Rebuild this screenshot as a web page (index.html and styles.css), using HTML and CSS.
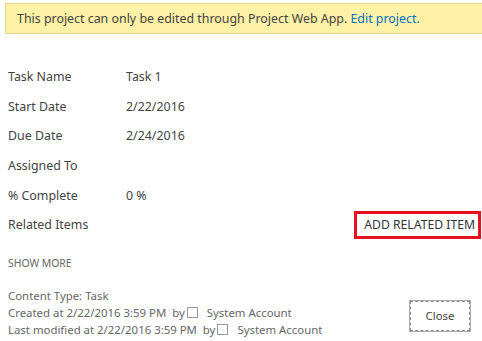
FILE: index.html
```html
<!DOCTYPE html>
<html>
<head>
<meta charset="utf-8">
<link rel="stylesheet" href="styles.css">
</head>
<body>
<div class="banner">This project can only be edited through Project Web App. <a class="link" href="#">Edit project.</a></div>
<div class="fields">
  <div class="row"><span class="label">Task Name</span><span class="value">Task 1</span></div>
  <div class="row"><span class="label">Start Date</span><span class="value">2/22/2016</span></div>
  <div class="row"><span class="label">Due Date</span><span class="value">2/24/2016</span></div>
  <div class="row"><span class="label">Assigned To</span><span class="value"></span></div>
  <div class="row"><span class="label">% Complete</span><span class="value">0 %</span></div>
  <div class="row related"><span class="label">Related Items</span><span class="add">ADD RELATED ITEM</span></div>
</div>
<div class="showmore">SHOW MORE</div>
<div class="footer">
  <div class="meta">
    <div>Content Type: Task</div>
    <div>Created at 2/22/2016 3:59 PM&nbsp; by<span class="box"></span> System Account</div>
    <div>Last modified at 2/22/2016 3:59 PM&nbsp; by<span class="box"></span> System Account</div>
  </div>
  <button class="close">Close</button>
</div>
</body>
</html>
```
FILE: styles.css
```css
html, body {
  margin: 0;
  padding: 0;
  background: #fff;
  overflow: hidden;
}
body {
  font-family: "Noto Sans", "Open Sans", sans-serif;
  color: #444;
  font-size: 12px;
  width: 482px;
  height: 341px;
}
.banner {
  margin: 3px -10px 0 5px;
  height: 31px;
  line-height: 30px;
  box-sizing: border-box;
  border: 1px solid #e3d991;
  background: #fff1a5;
  padding-left: 11px;
  font-size: 12.4px;
  color: #444;
  white-space: nowrap;
}
.link {
  color: #0072c6;
  text-decoration: none;
}
.fields {
  margin-top: 28px;
  padding-left: 8px;
}
.row {
  display: flex;
  align-items: center;
  height: 29.6px;
  font-size: 12.4px;
  color: #444;
}
.label {
  width: 118px;
}
.value {
  color: #444;
}
.related {
  justify-content: space-between;
  padding-right: 1px;
}
.add {
  border: 3px solid #e81123;
  padding: 0 3px 0 7px;
  height: 28px;
  line-height: 22px;
  box-sizing: border-box;
  color: #333;
  font-size: 12.2px;
}
.showmore {
  margin-top: 16px;
  padding-left: 8px;
  font-size: 10.4px;
  color: #666;
}
.footer {
  margin-top: 17px;
  padding-left: 8px;
  padding-right: 12px;
  display: flex;
  justify-content: space-between;
  align-items: flex-end;
}
.meta {
  font-size: 11.4px;
  color: #666;
  line-height: 17px;
}
.box {
  display: inline-block;
  width: 9px;
  height: 9px;
  border: 1px solid #999;
  margin: 0 6px 0 2px;
  vertical-align: -1px;
}
.close {
  width: 60px;
  height: 30px;
  margin-bottom: 7px;
  background: #fff;
  border: 1px dashed #888;
  outline: 1px solid #ababab;
  outline-offset: 0;
  font-family: inherit;
  font-size: 11.4px;
  color: #444;
  padding: 0;
}
```
